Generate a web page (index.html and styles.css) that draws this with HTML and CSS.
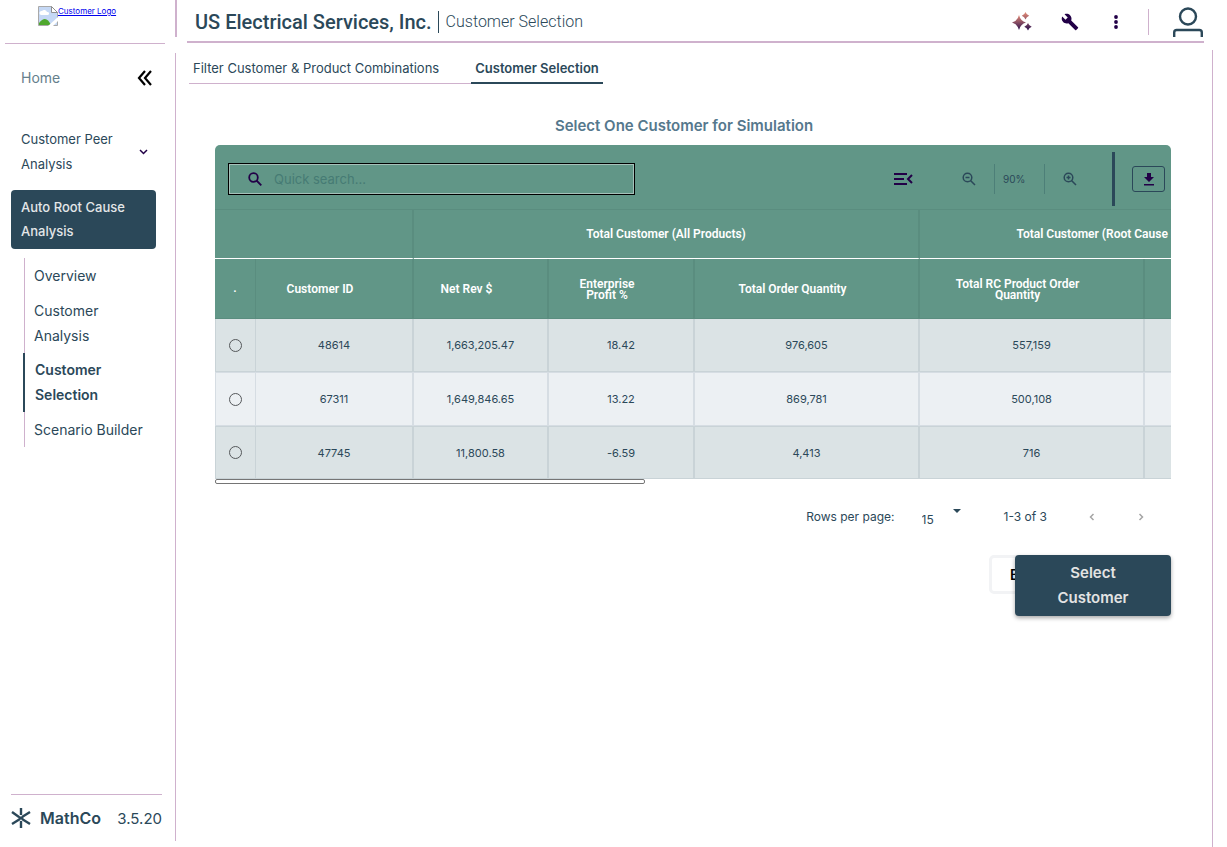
FILE: index.html
```html
<!DOCTYPE html>
<html lang="en">
<head>
<meta charset="utf-8">
<title>Customer Selection</title>
<link rel="stylesheet" href="styles.css">
</head>
<body>
<div class="app">
  <aside class="sidebar">
    <div class="brand">
      <a class="brand-link" href="#">
        <svg width="20" height="20" viewBox="0 0 20 20" aria-hidden="true"><path d="M.5.5h13l6 6v13H.5z" fill="#c5d8f5" stroke="#a9a9a9"/><path d="M13.500.5v6h6z" fill="#fff" stroke="#8f8f8f"/><path d="M3 9a2 2 0 0 1 1-4 3 3 0 0 1 5 1 1.500 1.500 0 0 1 1 3z" fill="#fff"/><path d="M1 19v-2q7-9 12 2z" fill="#4fa82e"/><path d="M10 20 20 11v4l-5 5z" fill="#fff"/></svg><span>Customer Logo</span>
      </a>
    </div>
    <div class="side-body">
      <div class="home-row">
        <a class="home" href="#">Home</a>
        <button class="icon-btn" aria-label="Collapse menu"><svg width="15" height="16" viewBox="0 0 15 16" fill="none" stroke="#000" stroke-width="2.200"><path d="M8 1 2 8l6 7M14 1 8 8l6 7"/></svg></button>
      </div>
      <nav class="nav">
        <a class="nav-group" href="#"><span>Customer Peer Analysis</span><svg width="9" height="6" viewBox="0 0 9 6" fill="none" stroke="#220047" stroke-width="1.500"><path d="m1 1 3.500 3.500L8 1"/></svg></a>
        <a class="nav-group current" href="#"><span>Auto Root Cause Analysis</span></a>
        <div class="subnav">
          <a href="#">Overview</a>
          <a href="#">Customer Analysis</a>
          <a class="selected" href="#">Customer Selection</a>
          <a href="#">Scenario Builder</a>
        </div>
      </nav>
      <div class="side-foot">
        <svg width="20" height="22" viewBox="0 0 20 22" fill="none" stroke="#2b4859" stroke-width="2.400"><path d="M10 1v7M10 14v7M1 5l7 5M19 5l-8 5M1 17l8-5M19 17l-8-5M8 10l4 2M12 10l-4 2"/></svg>
        <strong>MathCo</strong><span>3.5.20</span>
      </div>
    </div>
  </aside>

  <div class="main">
    <header class="topbar">
      <h1>US Electrical Services, Inc.</h1>
      <span class="crumb">Customer Selection</span>
      <div class="actions">
        <button class="icon-btn" aria-label="Assistant"><svg width="20" height="20" viewBox="0 0 20 20"><defs><linearGradient id="spark" x1="0" y1="0" x2="0" y2="1"><stop offset="0" stop-color="#e58b76"/><stop offset="1" stop-color="#2a1050"/></linearGradient></defs><path fill="url(#spark)" d="M7 3q1.500 6 7 7.500Q8.500 12 7 18 5.500 12 0 10.500 5.500 9 7 3z"/><path fill="url(#spark)" d="M13.500 0q.9 2.800 3.700 3.700-2.800.9-3.700 3.800-.9-2.900-3.700-3.800Q12.600 2.800 13.500 0zM16 11q.9 2.800 3.700 3.700-2.800.9-3.700 3.800-.9-2.900-3.700-3.800 2.800-.9 3.700-3.700z"/></svg></button>
        <button class="icon-btn" aria-label="Tools"><svg width="18" height="18" viewBox="0 0 24 24" fill="#220047"><path d="m22.700 19-9.100-9.100c.9-2.300.4-5-1.500-6.900-2-2-5-2.400-7.400-1.300L9 6 6 9 1.600 4.700C.4 7.100.9 10.100 2.900 12.100c1.900 1.900 4.600 2.400 6.900 1.500l9.100 9.100c.4.4 1 .4 1.400 0l2.300-2.300c.5-.4.5-1.100.1-1.400z"/></svg></button>
        <button class="icon-btn" aria-label="More"><svg width="6" height="16" viewBox="0 0 6 16" fill="#220047"><circle cx="3" cy="3" r="1.900"/><circle cx="3" cy="8" r="1.900"/><circle cx="3" cy="13" r="1.900"/></svg></button>
        <span class="rule"></span>
        <button class="icon-btn" aria-label="Profile"><svg width="30" height="30" viewBox="0 0 30 30" fill="none" stroke="#2b4859" stroke-width="2.400"><circle cx="15" cy="9.500" r="8"/><path d="M1.200 30v-4.500q0-2.500 2.500-2.500h22.600q2.500 0 2.500 2.500V30"/></svg></button>
      </div>
    </header>

    <main class="content">
      <nav class="tabs">
        <a class="tab" href="#">Filter Customer &amp; Product Combinations</a>
        <a class="tab active" href="#">Customer Selection</a>
      </nav>

      <section class="panel">
        <h2>Select One Customer for Simulation</h2>
        <div class="grid">
          <div class="toolbar">
            <label class="search">
              <svg width="14" height="14" viewBox="0 0 14 14" fill="none" stroke="#220047" stroke-width="1.800"><circle cx="5.500" cy="5.500" r="4.300"/><path d="m8.500 8.500 4.800 4.800"/></svg>
              <input type="text" placeholder="Quick search..." aria-label="Quick search">
            </label>
            <div class="tools">
              <button class="icon-btn density" aria-label="Collapse columns"><svg width="19" height="14" viewBox="0 0 19 14" fill="none" stroke="#220047" stroke-width="2"><path d="M0 2h13M0 7h10M0 12h13M18 3l-4 4 4 4"/></svg></button>
              <button class="icon-btn" aria-label="Zoom out"><svg width="14" height="14" viewBox="0 0 14 14" fill="none" stroke="#2b4859" stroke-width="1.500"><circle cx="5.500" cy="5.500" r="4.300"/><path d="m8.500 8.500 4.500 4.500M3.500 5.500h4"/></svg></button>
              <span class="zoom">90%</span>
              <button class="icon-btn" aria-label="Zoom in"><svg width="14" height="14" viewBox="0 0 14 14" fill="none" stroke="#2b4859" stroke-width="1.500"><circle cx="5.500" cy="5.500" r="4.300"/><path d="m8.500 8.500 4.500 4.500M3.500 5.500h4M5.500 3.500v4"/></svg></button>
              <span class="bar"></span>
              <button class="download" aria-label="Download"><svg width="12" height="14" viewBox="0 0 12 14" fill="#220047"><path d="M4 1h4v4h3L6 10 1 5h3zM1 12h10v1.500H1z"/></svg></button>
            </div>
          </div>
          <div class="scroller">
            <table>
              <colgroup><col class="c-pick"><col class="c-id"><col class="c-rev"><col class="c-profit"><col class="c-qty"><col class="c-qty"><col class="c-last"></colgroup>
              <thead>
                <tr class="groups"><th colspan="2"></th><th colspan="3">Total Customer (All Products)</th><th colspan="2">Total Customer (Root Cause Products)</th></tr>
                <tr class="heads"><th class="pick">.</th><th>Customer ID</th><th>Net Rev $</th><th>Enterprise<br>Profit %</th><th>Total Order Quantity</th><th>Total RC Product Order<br>Quantity</th><th></th></tr>
              </thead>
              <tbody>
                <tr><td class="pick"><input type="radio" name="customer" aria-label="48614"></td><td>48614</td><td>1,663,205.47</td><td>18.42</td><td>976,605</td><td>557,159</td><td></td></tr>
                <tr><td class="pick"><input type="radio" name="customer" aria-label="67311"></td><td>67311</td><td>1,649,846.65</td><td>13.22</td><td>869,781</td><td>500,108</td><td></td></tr>
                <tr><td class="pick"><input type="radio" name="customer" aria-label="47745"></td><td>47745</td><td>11,800.58</td><td>-6.59</td><td>4,413</td><td>716</td><td></td></tr>
              </tbody>
            </table>
          </div>
          <div class="thumb"></div>
        </div>

        <div class="pager">
          <label for="rows">Rows per page:</label>
          <span class="rows">
            <select id="rows"><option>15</option></select>
            <svg width="8" height="4" viewBox="0 0 8 4" fill="#2b4859"><path d="M0 0h8L4 4z"/></svg>
          </span>
          <span class="range">1-3 of 3</span>
          <button class="icon-btn" aria-label="Previous page"><svg width="6" height="8" viewBox="0 0 6 8" fill="none" stroke="#a5a5a5" stroke-width="1.500"><path d="M4.500 1 1.500 4l3 3"/></svg></button>
          <button class="icon-btn next" aria-label="Next page"><svg width="6" height="8" viewBox="0 0 6 8" fill="none" stroke="#a5a5a5" stroke-width="1.500"><path d="m1.500 1 3 3-3 3"/></svg></button>
        </div>

        <div class="buttons">
          <button class="back">Back</button>
          <button class="primary">Select Customer</button>
        </div>
      </section>
    </main>
  </div>
</div>
</body>
</html>
```
FILE: styles.css
```css
* { box-sizing: border-box; }

body {
  margin: 0;
  background: #fff;
  color: #2b4859;
  font-family: Inter, "Liberation Sans", sans-serif;
  font-size: 13px;
}

a { color: inherit; text-decoration: none; }
h1, h2 { margin: 0; }
button, input, select { font: inherit; color: inherit; }
svg { display: block; flex: none; }

.icon-btn {
  display: flex;
  padding: 0;
  border: 0;
  background: none;
}

.app { display: flex; min-height: 100vh; }

.sidebar {
  display: flex;
  flex-direction: column;
  flex: none;
  width: 177px;
  padding-bottom: 6px;
}

.brand {
  height: 37px;
  padding: 6px 0 0 38px;
  border-right: 2px solid #cfb1cd;
}

.brand-link {
  display: flex;
  color: #0000ee;
  font-size: 8px;
  line-height: 11px;
  text-decoration: underline;
}

.side-body {
  position: relative;
  display: flex;
  flex-direction: column;
  flex: 1;
  width: 176px;
  margin-top: 16px;
  padding: 16px 0 0 11px;
  border-right: 1px solid #cfb1cd;
}

.side-body::before {
  content: "";
  position: absolute;
  top: -10px;
  left: 5px;
  right: 10px;
  border-top: 1px solid #cfb1cd;
}

.home-row {
  display: flex;
  align-items: center;
  justify-content: space-between;
  padding: 0 23px 0 10px;
  font-size: 14px;
  line-height: 18px;
}

.home { color: #65808c; }

.nav { margin-top: 40px; }

.nav-group {
  display: flex;
  align-items: center;
  gap: 16px;
  width: 145px;
  padding: 0 8px 0 10px;
  line-height: 25px;
}

.nav-group span { flex: 1; }

.current {
  margin-top: 13px;
  padding: 5px 10px 6px;
  border-radius: 4px;
  background: #2b4859;
  color: #e3e6e8;
  font-weight: 500;
  line-height: 24px;
}

.subnav {
  display: flex;
  flex-direction: column;
  margin: 9px 0 0 13px;
  border-left: 1px solid #cfb1cd;
  font-size: 14px;
  line-height: 25px;
}

.subnav a { width: 136px; padding: 5px 10px 5px 9px; }
.subnav a:nth-child(2) { padding-right: 40px; }

.subnav .selected {
  margin-left: -2px;
  padding: 4px 40px 5px 10px;
  border-left: 2px solid #2b4859;
  font-weight: 600;
}

.side-foot {
  display: flex;
  align-items: center;
  width: 151px;
  margin-top: auto;
  padding: 12px 0;
  border-top: 1px solid #cfb1cd;
  font-size: 15px;
}

.side-foot strong { margin: 0 auto 0 9px; font-size: 16px; line-height: 18px; font-weight: 600; }

.main {
  display: flex;
  flex-direction: column;
  flex: 1;
  min-width: 0;
  padding-left: 10px;
}

.topbar {
  display: flex;
  align-items: center;
  height: 43px;
  margin-right: 23px;
  padding: 2px 0 0 8px;
  border-bottom: 2px solid #cfb1cd;
  font-family: Roboto, "Liberation Sans", sans-serif;
}

.topbar h1 {
  font-size: 20px;
  font-weight: 500;
  line-height: 22px;
}

.crumb {
  margin-left: 6px;
  padding-left: 7px;
  border-left: 1px solid #2b4859;
  font-size: 16px;
  font-weight: 300;
  line-height: 22px;
}

.actions { display: flex; align-items: center; margin: 0 1px 0 auto; gap: 29px; }
.actions .rule { width: 1px; height: 26px; background: #cfb1cd; }
.actions .icon-btn:nth-child(3) { margin-left: 5px; }
.actions .icon-btn:last-child { margin-left: -5px; }

.content {
  flex: 1;
  margin: 7px 14px 0 0;
  padding-left: 2px;
  border-right: 1px solid #cfb1cd;
}

.tabs {
  display: flex;
  width: fit-content;
  border-bottom: 1px solid #cfb1cd;
  line-height: 18px;
}

.tab { padding: 9px 32px 6px 4px; }

.active {
  margin-bottom: -1px;
  padding: 9px 4px 5px;
  border-bottom: 2px solid #2b4859;
  font-weight: 600;
}

.panel {
  display: flex;
  flex-direction: column;
  padding: 33px 41px 0 26px;
}

.panel h2 {
  align-self: center;
  margin-right: 18px;
  color: #55788d;
  font-size: 15px;
  font-weight: 600;
  line-height: 18px;
}

.grid { margin-top: 10px; }

.toolbar {
  display: flex;
  align-items: center;
  justify-content: space-between;
  height: 64px;
  padding: 0 6px 0 13px;
  border-radius: 5px 5px 0 0;
  background: #619687;
}

.search {
  display: flex;
  align-items: center;
  gap: 12px;
  width: 407px;
  height: 32px;
  margin-top: 3px;
  padding-left: 19px;
  border: 1px solid #000;
  box-shadow: inset 0 0 0 1px #a5c1b9;
  font-size: 13px;
}

.search input {
  flex: 1;
  min-width: 0;
  margin-right: 4px;
  padding: 0;
  border: 0;
  outline: 0;
  background: none;
}

.search input::placeholder { color: #467b74; opacity: 1; }

.tools { display: flex; align-items: center; margin-top: 3px; }
.density { margin-right: 49px; }

.zoom {
  width: 51px;
  margin: 0 18px;
  padding: 8px;
  border: solid #4d7f78;
  border-width: 0 1px;
  font-size: 10px;
  line-height: 14px;
}

.bar { width: 3px; height: 54px; margin: 0 17px 0 35px; background: #2b4859; }

.download {
  display: grid;
  place-items: center;
  width: 33px;
  height: 26px;
  padding: 0;
  border: 1px solid #2b4859;
  border-radius: 3px;
  background: none;
}

.scroller { overflow: hidden; }

table {
  width: 1107px;
  table-layout: fixed;
  border-collapse: separate;
  border-spacing: 0;
  font-size: 11px;
  text-align: center;
}

.c-pick { width: 41px; }
.c-id { width: 158px; }
.c-rev { width: 135px; }
.c-profit { width: 146px; }
.c-qty { width: 225px; }
.c-last { width: 177px; }

th {
  padding: 0;
  border: solid #5a8d7f;
  border-width: 0 2px 1px 0;
  background: #619687;
  color: #fff;
  font-family: Roboto, "Liberation Sans", sans-serif;
  font-size: 12px;
  font-weight: 600;
  line-height: 11px;
}

.groups th { height: 50px; border-top-width: 1px; border-bottom-color: #fff; }
.heads th { height: 60px; padding: 2px 28px 0 0; }
.heads .pick { padding: 0; }

td {
  height: 54px;
  padding: 0;
  border: solid #c9d3d7;
  border-width: 0 2px 1px 0;
  background: #dbe3e5;
}

tbody tr:nth-child(even) td { border-color: #d6dde3; border-top-width: 1px; background: #ecf0f3; }
tbody tr:last-child td { height: 53px; border-top-width: 1px; }
tbody tr:first-child td { height: 53px; }
.heads .pick, tbody .pick { border-right-width: 1px; }
td.pick { border-left-width: 1px; }

td input {
  display: block;
  appearance: none;
  width: 13px;
  height: 13px;
  margin: 0 auto;
  border: 1px solid #55585b;
  border-radius: 50%;
}

.thumb {
  width: 45%;
  height: 5px;
  border: 1px solid #757575;
  border-radius: 2px;
  background: #fff;
}

.pager {
  display: flex;
  align-items: center;
  justify-content: flex-end;
  height: 66px;
  padding: 0 27px 1px 0;
  font-size: 12px;
}

.rows { display: flex; align-items: center; width: 39px; margin: 0 43px 0 27px; }
.rows svg { margin-bottom: 12px; }

.rows select {
  appearance: none;
  width: 31px;
  margin-top: 5px;
  padding: 0;
  border: 0;
  background: none;
}

.range { margin-right: 42px; }
.next { margin-left: 43px; }

.buttons {
  display: flex;
  align-items: flex-start;
  justify-content: flex-end;
  margin-top: 5px;
  font-size: 14px;
  font-weight: 600;
}

.back {
  width: 80px;
  height: 39px;
  margin: 0 -54px 0 0;
  padding: 0 0 0 18px;
  border: 3px solid #f2f3f5;
  border-radius: 5px;
  background: #fff;
  color: #000;
  text-align: left;
}

.primary {
  position: relative;
  width: 156px;
  padding: 5px 40px 6px;
  border: 0;
  border-radius: 4px;
  background: #2b4859;
  box-shadow: 0 2px 4px rgba(0, 0, 0, .35);
  color: #e3e3e3;
  font-size: 15px;
  line-height: 25px;
}
```
